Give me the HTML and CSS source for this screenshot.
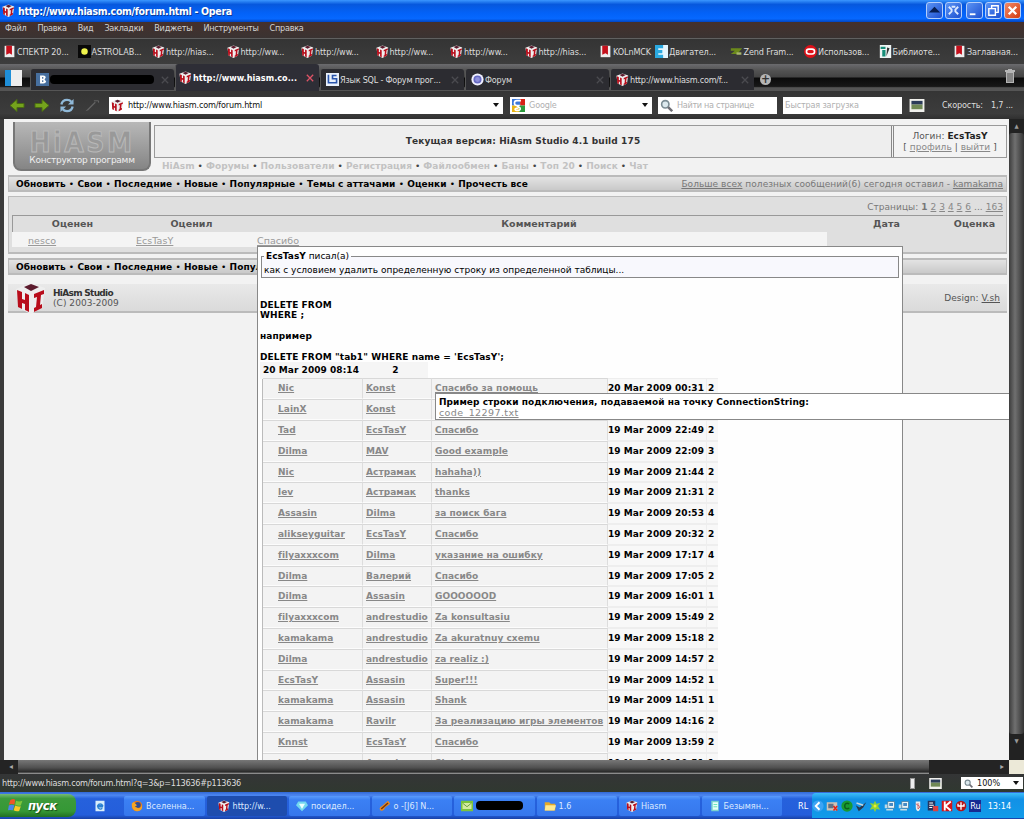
FILE: index.html
```html
<!DOCTYPE html>
<html lang="ru">
<head>
  <meta charset="UTF-8">
  <title>http://www.hiasm.com/forum.html - Opera</title>
  <link rel="stylesheet" href="styles.css">
</head>
<body>

  <!-- Иконки -->
  <svg class="sprite" width="0" height="0">
    <symbol id="hi" viewBox="0 0 32 32">
      <path d="M16 1l14 5-3 20-11 6L4 26 1 7z" fill="#eee"/>
      <path d="M9 5l7-3 8 3-8 4z" fill="#5c1b2d"/>
      <path d="M2 8l5 2v7l3 1v-7l4 2v17l-4-2v-6l-3-1v6l-4-2zM19 12l10-4v4l-3 1-1 10 2-1v4l-8 4v-4l2-1 1-10-3 1z" fill="#b80d1b"/>
    </symbol>
    <symbol id="book" viewBox="0 0 16 16">
      <path d="M2 1h12v14H2z" fill="#eee"/><path d="M4 1h7v11l-3-2-4 2z" fill="#c4101c"/>
    </symbol>
    <symbol id="sun" viewBox="0 0 16 16">
      <path d="M0 0h16v16H0z" fill="#090909"/><circle cx="8" cy="8" r="4" fill="#f0f44c"/>
    </symbol>
    <symbol id="eng" viewBox="0 0 16 16">
      <path d="M0 0h16v16H0z" fill="#e5f6ff"/><path d="M0 0h10v4H4v2h5v4H4v2h6v4H0z" fill="#2ba9e0"/>
    </symbol>
    <symbol id="zend" viewBox="0 0 16 16">
      <path d="M1 4h14l-6 7H1l5-4H1z" fill="#6c8a1b"/><path d="M8 9h6v3H8z" fill="#a7b56c"/>
    </symbol>
    <symbol id="oracle" viewBox="0 0 16 16">
      <circle cx="8" cy="8" r="8" fill="#dd1018"/><rect x="3" y="5" width="10" height="6" rx="3" fill="#dd1018" stroke="#fff" stroke-width="2"/>
    </symbol>
    <symbol id="lib" viewBox="0 0 16 16">
      <path d="M1 0h14v16H1z" fill="#eef5f4"/><path d="M2 2h6v3H2zM4 6h4v8H4z" fill="#168d78"/><path d="M10 3l3 1-4 10z" fill="#333"/>
    </symbol>
    <symbol id="vk" viewBox="0 0 16 16">
      <path d="M0 0h16v16H0z" fill="#476f9f"/><path d="M5 3h4q3 0 3 2.500L10.500 8l2 2.500Q12 13 9 13H5zm2.500 2v2H9V5zm0 4v2H9V9z" fill="#fff"/>
    </symbol>
    <symbol id="sql" viewBox="0 0 16 16">
      <path d="M0 0h16v16H0z" fill="#e9f0fb"/><path d="M3 2v10h5M13 3H8v4h5v5H8" fill="none" stroke="#2a55ac" stroke-width="2"/>
    </symbol>
    <symbol id="forum" viewBox="0 0 16 16">
      <circle cx="8" cy="8" r="7.500" fill="#f0f0ff"/><circle cx="8" cy="8" r="4" fill="#8f90dc" stroke="#666ac2" stroke-width="2"/>
    </symbol>
    <symbol id="close" viewBox="0 0 10 10">
      <path d="M1 1l8 8M9 1L1 9" fill="none" stroke="currentColor" stroke-width="1.600"/>
    </symbol>
    <symbol id="arrow" viewBox="0 0 16 14">
      <path d="M1 7l7-6v4h7v4H8v4z" fill="#75a31d" stroke="#496b12"/>
    </symbol>
    <symbol id="reload" viewBox="0 0 16 16">
      <path d="M2 7q1-5 6-5 3 0 4.500 2M14 9q-1 5-6 5-3 0-4.500-2" fill="none" stroke="#8fb8d8" stroke-width="2.500"/>
      <path d="M15 1v6H9zM1 15V9h6z" fill="#8fb8d8"/>
    </symbol>
    <symbol id="pen" viewBox="0 0 16 16">
      <path d="M1 14l3-1 8-8-1-1-8 8z" fill="#636363"/><path d="M10 3h5v2" fill="none" stroke="#666"/>
    </symbol>
    <symbol id="google" viewBox="0 0 16 16">
      <path d="M0 0h10v8H0z" fill="#3c78d8"/><path d="M10 0h6v8h-6z" fill="#d82216"/><path d="M0 8h9v8H0z" fill="#e9b414"/><path d="M9 8h7v8H9z" fill="#2c9b3c"/>
      <path d="M11 2H6a3 3 0 0 0 0 6h2l-1 1 3 2q1 3-3 3-4 0-3-2 1-1 4-1" fill="none" stroke="#fff" stroke-width="2"/>
    </symbol>
    <symbol id="lens" viewBox="0 0 16 16">
      <circle cx="6.500" cy="6.500" r="4.500" fill="#dce9ee" stroke="#7b8c94" stroke-width="2"/><path d="M10 10l5 5" stroke="#6f6f76" stroke-width="3"/>
    </symbol>
    <symbol id="pic" viewBox="0 0 16 14">
      <path d="M0 0h16v14H0z" fill="#f0f0ec"/><path d="M2 2h12v4H2z" fill="#2b3b59"/><path d="M2 6h12v5H2z" fill="#708955"/>
    </symbol>
    <symbol id="trash" viewBox="0 0 12 14">
      <path d="M2 3h8v11H2zM1 1h10v2H1zM4 0h4v1H4z" fill="#b5b5b5"/><path d="M4 4v9M6 4v9M8 4v9" stroke="#555"/>
    </symbol>
    <symbol id="ie" viewBox="0 0 16 16">
      <path d="M2 1h12v14H2z" fill="#d9eefb"/><path d="M12 9H5a3.500 3.500 0 0 0 6 2M5 7.500a3.500 3.500 0 0 1 6.500 0z" fill="none" stroke="#2b81d2" stroke-width="1.800"/>
    </symbol>
    <symbol id="fox" viewBox="0 0 16 16">
      <circle cx="8" cy="8" r="7" fill="#eb7b13"/><circle cx="9" cy="6.500" r="4" fill="#2d4b94"/><path d="M1 5q3-4 4-1l3 3-3 2 5 2q4 0 4-5 3 8-6 9Q1 14 1 5z" fill="#f4a524"/>
    </symbol>
    <symbol id="diamond" viewBox="0 0 16 16">
      <path d="M3 2h10l3 5-8 8-8-8z" fill="#73d8ef"/><path d="M4 5h8l-4 7z" fill="#eaffff"/>
    </symbol>
    <symbol id="guitar" viewBox="0 0 16 16">
      <path d="M2 14q-3-4 2-6l8-7 3 4-7 5q-1 5-6 4z" fill="#ec8b1f"/><path d="M3 12l9-8" stroke="#75350c" stroke-width="2"/>
    </symbol>
    <symbol id="mail" viewBox="0 0 16 14">
      <path d="M0 0h16v14H0z" fill="#7cc43b"/><path d="M2 3h12v8H2z" fill="#d3ea9f"/><path d="M2 3l6 5 6-5" fill="none" stroke="#528c29"/>
    </symbol>
    <symbol id="folder" viewBox="0 0 16 14">
      <path d="M1 2h6l2 2h6v9H1z" fill="#e4a928"/><path d="M2 6h14l-2 7H1z" fill="#ffe990"/>
    </symbol>
    <symbol id="note" viewBox="0 0 16 16">
      <path d="M3 1h10v14H3z" fill="#7bd3cd"/><path d="M5 3h7v10H5z" fill="#e6fff7"/><path d="M6 6h5M6 9h5" stroke="#4da"/>
    </symbol>
    <symbol id="flag" viewBox="0 0 20 18">
      <path d="M3 2q4-2 6 0L8 8Q5 6 1 8z" fill="#ee5528"/><path d="M10 3q4 2 8 0l-2 6q-4 1-7-1z" fill="#80c63c"/>
      <path d="M1 9q4-2 7 0l-2 6q-3-1-6 0z" fill="#4b85e8"/><path d="M9 9q4 2 7 1l-2 6q-4 1-7-1z" fill="#fbc929"/>
    </symbol>
    <symbol id="plug" viewBox="0 0 16 16">
      <path d="M1 6h5v5H1z" fill="#bcd8e8"/><path d="M5 2h9v9H5z" fill="#e9f4f8" stroke="#457a9c"/><path d="M7 4h5v4H7z" fill="#478bc4"/><path d="M3 12h9v2H3z" fill="#c3dbe5"/>
    </symbol>
  </svg>

  <div class="window">
    <div class="titlebar">
      <svg class="icon14"><use href="#hi"/></svg>
      <span class="title">http://www.hiasm.com/forum.html - Opera</span>
      <div class="win-buttons">
        <span class="win-btn"><svg viewBox="0 0 16 16"><path d="M2 10l6-6 6 6z" fill="#071e53"/></svg></span>
        <span class="win-btn"><svg viewBox="0 0 16 16"><path d="M3 4l3 3v2l-3 3M13 4l-3 3v2l3 3M6 4h4" fill="none" stroke="#dce9ff" stroke-width="2"/></svg></span>
        <span class="win-btn min"><svg viewBox="0 0 16 16"><path d="M3 11h6v2H3z" fill="#fff"/></svg></span>
        <span class="win-btn"><svg viewBox="0 0 16 16"><path d="M6 6V3h7v7h-3M3 6h7v7H3z" fill="none" stroke="#fff" stroke-width="1.500"/></svg></span>
        <span class="win-btn red"><svg viewBox="0 0 16 16"><path d="M4 4l8 8M12 4l-8 8" stroke="#fff" stroke-width="2.500"/></svg></span>
      </div>
    </div>

    <div class="menubar">
      <span>Файл</span><span>Правка</span><span>Вид</span><span>Закладки</span><span>Виджеты</span><span>Инструменты</span><span>Справка</span>
    </div>

    <div class="bookmarks">
      <a><svg><use href="#book"/></svg>СПЕКТР 20...</a>
      <a><svg><use href="#sun"/></svg>ASTROLAB...</a>
      <a><svg><use href="#hi"/></svg>http://hias...</a>
      <a><svg><use href="#hi"/></svg>http://ww...</a>
      <a><svg><use href="#hi"/></svg>http://ww...</a>
      <a><svg><use href="#hi"/></svg>http://ww...</a>
      <a><svg><use href="#hi"/></svg>http://ww...</a>
      <a><svg><use href="#hi"/></svg>http://hias...</a>
      <a class="narrow"><svg><use href="#book"/></svg>KOLnMCK</a>
      <a><svg><use href="#eng"/></svg>Двигател...</a>
      <a><svg><use href="#zend"/></svg>Zend Fram...</a>
      <a><svg><use href="#oracle"/></svg>Использов...</a>
      <a><svg><use href="#lib"/></svg>Библиоте...</a>
      <a><svg><use href="#book"/></svg>Заглавная...</a>
    </div>

    <div class="tabs">
      <span class="panel-btn"></span>
      <div class="tab"><svg><use href="#vk"/></svg><span class="blot"></span><svg class="x"><use href="#close"/></svg></div>
      <div class="tab active"><svg><use href="#hi"/></svg><span>http://www.hiasm.co...</span><svg class="x"><use href="#close"/></svg></div>
      <div class="tab"><svg><use href="#sql"/></svg><span>Язык SQL - Форум прог...</span><svg class="x"><use href="#close"/></svg></div>
      <div class="tab"><svg><use href="#forum"/></svg><span>Форум</span><svg class="x"><use href="#close"/></svg></div>
      <div class="tab"><svg><use href="#hi"/></svg><span>http://www.hiasm.com/f...</span><svg class="x"><use href="#close"/></svg></div>
      <span class="new-tab">+</span>
      <svg class="trash"><use href="#trash"/></svg>
    </div>

    <div class="address">
      <svg class="nav-icon"><use href="#arrow"/></svg>
      <svg class="nav-icon forward"><use href="#arrow"/></svg>
      <svg class="nav-icon"><use href="#reload"/></svg>
      <svg class="nav-icon"><use href="#pen"/></svg>
      <div class="field url"><svg><use href="#hi"/></svg><span>http://www.hiasm.com/forum.html</span><i class="caret"></i></div>
      <div class="field google"><svg><use href="#google"/></svg><span>Google</span><i class="caret"></i></div>
      <div class="field find"><svg><use href="#lens"/></svg><span>Найти на странице</span></div>
      <div class="field fast"><span>Быстрая загрузка</span></div>
      <svg class="pic"><use href="#pic"/></svg>
      <span class="speed">Скорость:</span><span class="speed">1,7 ...</span>
    </div>

    <div class="view">
      <div class="page">
        <header class="head">
          <div class="logo"><b>HiASM</b><span>Конструктор программ</span></div>
          <div class="head-main">
            <div class="boxes">
              <div class="version">Текущая версия: HiAsm Studio 4.1 build 175</div>
              <div class="login"><div>Логин: <b>EcsTasY</b></div><div>[ <a>профиль</a> | <a>выйти</a> ]</div></div>
            </div>
            <nav class="site-nav">
              <a>HiAsm</a>•<a>Форумы</a>•<a>Пользователи</a>•<a>Регистрация</a>•<a>Файлообмен</a>•<a>Баны</a>•<a>Топ 20</a>•<a>Поиск</a>•<a>Чат</a>
            </nav>
          </div>
        </header>

        <div class="bar">
          <div class="bar-links">Обновить <i>•</i> Свои <i>•</i> Последние <i>•</i> Новые <i>•</i> Популярные <i>•</i> Темы с аттачами <i>•</i> Оценки <i>•</i> Прочесть все</div>
          <div class="bar-note"><a>Больше всех</a> полезных сообщений(6) сегодня оставил - <a>kamakama</a></div>
        </div>

        <div class="rates">
          <div class="pages">Страницы: <b>1</b> <a>2</a> <a>3</a> <a>4</a> <a>5</a> <a>6</a> ... <a>163</a></div>
          <div class="rates-head"><span>Оценен</span><span>Оценил</span><span>Комментарий</span><span>Дата</span><span>Оценка</span></div>
          <div class="rates-row"><a>nesco</a><a>EcsTasY</a><a>Спасибо</a></div>
        </div>

        <div class="bar second">
          <div class="bar-links">Обновить <i>•</i> Свои <i>•</i> Последние <i>•</i> Новые <i>•</i> Популярные</div>
        </div>

        <footer class="foot">
          <svg><use href="#hi"/></svg>
          <div class="copy"><b>HiAsm Studio</b><br>(C) 2003-2009</div>
          <div class="design">Design: <a>V.sh</a></div>
        </footer>

        <!-- Всплывающее сообщение -->
        <div class="popup">
          <fieldset>
            <legend><b>EcsTasY</b> писал(а)</legend>
            как с условием удалить определенную строку из определенной таблицы...
          </fieldset>
          <div class="message">DELETE FROM<br>WHERE ;<br><br>например<br><br>DELETE FROM "tab1" WHERE name = 'EcsTasY';</div>
          <div class="first"><span>20 Mar 2009 08:14</span><span>2</span></div>
          <div class="list">
            <div class="row"><a>Nic</a><a>Konst</a><a>Спасибо за помощь</a><span>20 Mar 2009 00:31</span><span>2</span></div>
            <div class="row"><a>LainX</a><a>Konst</a><a></a><span></span><span></span></div>
            <div class="row"><a>Tad</a><a>EcsTasY</a><a>Спасибо</a><span>19 Mar 2009 22:49</span><span>2</span></div>
            <div class="row"><a>Dilma</a><a>MAV</a><a>Good example</a><span>19 Mar 2009 22:09</span><span>3</span></div>
            <div class="row"><a>Nic</a><a>Астрамак</a><a>hahaha))</a><span>19 Mar 2009 21:44</span><span>2</span></div>
            <div class="row"><a>lev</a><a>Астрамак</a><a>thanks</a><span>19 Mar 2009 21:31</span><span>2</span></div>
            <div class="row"><a>Assasin</a><a>Dilma</a><a>за поиск бага</a><span>19 Mar 2009 20:53</span><span>4</span></div>
            <div class="row"><a>alikseyguitar</a><a>EcsTasY</a><a>Спасибо</a><span>19 Mar 2009 20:32</span><span>2</span></div>
            <div class="row"><a>filyaxxxcom</a><a>Dilma</a><a>указание на ошибку</a><span>19 Mar 2009 17:17</span><span>4</span></div>
            <div class="row"><a>Dilma</a><a>Валерий</a><a>Спасибо</a><span>19 Mar 2009 17:05</span><span>2</span></div>
            <div class="row"><a>Dilma</a><a>Assasin</a><a>GOOOOOOD</a><span>19 Mar 2009 16:01</span><span>1</span></div>
            <div class="row"><a>filyaxxxcom</a><a>andrestudio</a><a>Za konsultasiu</a><span>19 Mar 2009 15:49</span><span>2</span></div>
            <div class="row"><a>kamakama</a><a>andrestudio</a><a>Za akuratnuy cxemu</a><span>19 Mar 2009 15:18</span><span>2</span></div>
            <div class="row"><a>Dilma</a><a>andrestudio</a><a>za realiz :)</a><span>19 Mar 2009 14:57</span><span>2</span></div>
            <div class="row"><a>EcsTasY</a><a>Assasin</a><a>Super!!!</a><span>19 Mar 2009 14:52</span><span>1</span></div>
            <div class="row"><a>kamakama</a><a>Assasin</a><a>Shank</a><span>19 Mar 2009 14:51</span><span>1</span></div>
            <div class="row"><a>kamakama</a><a>Ravilr</a><a>За реализацию игры элементов</a><span>19 Mar 2009 14:16</span><span>2</span></div>
            <div class="row"><a>Knnst</a><a>EcsTasY</a><a>Спасибо</a><span>19 Mar 2009 13:59</span><span>2</span></div>
            <div class="row"><a>kamakama</a><a>Assasin</a><a>Shank</a><span>19 Mar 2009 10:51</span><span>1</span></div>
          </div>
        </div>
        <div class="hint"><b>Пример строки подключения, подаваемой на точку ConnectionString:</b><a>code_12297.txt</a></div>
      </div>
      <div class="vscroll"><span>▲</span><span class="thumb"></span><span>▼</span></div>
    </div>

    <div class="hscroll"><span>◂</span><span class="thumb"></span><span>▸</span><i class="corner"></i></div>

    <div class="status">
      <span class="link">http://www.hiasm.com/forum.html?q=3&amp;p=113636#p113636</span>
      <i class="width-btn"></i>
      <svg class="pic small"><use href="#pic"/></svg>
      <div class="zoom"><svg><use href="#lens"/></svg>100%<i class="caret"></i></div>
    </div>

    <div class="taskbar">
      <div class="start"><svg><use href="#flag"/></svg>пуск</div>
      <svg class="quick"><use href="#ie"/></svg>
      <div class="task"><svg><use href="#fox"/></svg>Вселенна...</div>
      <div class="task pressed"><svg><use href="#hi"/></svg>http://w...</div>
      <div class="task"><svg><use href="#diamond"/></svg>посидел...</div>
      <div class="task"><svg><use href="#guitar"/></svg>o -[J6] N...</div>
      <div class="task"><svg><use href="#mail"/></svg><span class="blot"></span></div>
      <div class="task"><svg><use href="#folder"/></svg>1.6</div>
      <div class="task"><svg><use href="#hi"/></svg>Hiasm</div>
      <div class="task"><svg><use href="#note"/></svg>Безымян...</div>
      <span class="lang">RL</span>
      <div class="tray">
        <svg viewBox="0 0 16 16"><circle cx="8" cy="8" r="7.500" fill="#3ca4f4"/><path d="M10 3L5 8l5 5" fill="none" stroke="#fff" stroke-width="2.500"/></svg>
        <svg viewBox="0 0 16 16"><path d="M1 3h14v11H1z" fill="#cfc2b5"/><path d="M3 5h7v6H3z" fill="#5f7287"/><path d="M10 8l5 6M15 8l-5 6" stroke="#e32114" stroke-width="2"/></svg>
        <svg viewBox="0 0 16 16"><circle cx="8" cy="8" r="7.500" fill="#189a34"/><path d="M11 5q-6-2-6 3t6 3" fill="none" stroke="#0b5f1a" stroke-width="2"/></svg>
        <svg viewBox="0 0 16 16"><path d="M1 7l5 3 9-7-4 7-6 5z" fill="#28384e"/><path d="M2 4l9 3" stroke="#c5d7df" stroke-width="2"/></svg>
        <svg viewBox="0 0 16 16"><path d="M8 1l2 4 5-1-3 4 3 5-5-1-2 4-2-4-5 1 3-5-3-4 5 1z" fill="#8ed336"/><circle cx="8" cy="8" r="2" fill="#edeb35"/></svg>
        <svg><use href="#plug"/></svg>
        <svg><use href="#plug"/></svg>
        <svg viewBox="0 0 16 16"><path d="M5 2h6v7q0 5-3 6-3-1-3-6z" fill="#e9edf0"/><path d="M8 4v8l3-3-6-4" fill="none" stroke="#c6484d"/></svg>
        <svg viewBox="0 0 16 16"><path d="M1 1h10v13H1z" fill="#25345f"/><path d="M3 4h5M3 7h6M3 10h4" stroke="#fff" stroke-width="1.500"/><path d="M8 8h7v7H8z" fill="#db4040"/></svg>
        <svg viewBox="0 0 16 16"><path d="M1 1h14v14H1z" fill="#d4141b"/><path d="M5 2v12M13 2L6 8l7 6" fill="none" stroke="#fff" stroke-width="2.500"/></svg>
        <svg viewBox="0 0 16 16"><circle cx="8" cy="8" r="7" fill="#b51317"/><path d="M4 5v3h8V5M8 3v10" fill="none" stroke="#fff" stroke-width="1.800"/></svg>
        <span class="ru">Ru</span>
        <span class="clock">13:14</span>
      </div>
    </div>
  </div>

</body>
</html>
```

FILE: styles.css
```css
body {
  margin: 0;
  background-color: #333;
  font-family: "DejaVu Sans Condensed", "DejaVu Sans", sans-serif;
  font-size: 9px;
}

.sprite {
  display: block;
}

.window {
  display: flex;
  flex-direction: column;
  width: 1024px;
  height: 819px;
  overflow: hidden;
  white-space: nowrap;
}

.window svg {
  flex: none;
}

/* Title */
.titlebar {
  display: flex;
  align-items: center;
  box-sizing: border-box;
  height: 22px;
  padding: 0 3px 1px 2px;
  background: linear-gradient(#3b97ff, #0758dd 20%, #0362f8 60%, #0668ff 85%, #0144c0);
  color: #fff;
}

.icon14 {
  width: 13px;
  height: 13px;
}

.title {
  margin-left: 3px;
  font-size: 10.500px;
  font-weight: bold;
  letter-spacing: -0.3px;
  text-shadow: 1px 1px #0a3b9b;
}

.win-buttons {
  display: flex;
  gap: 2px;
  margin-left: auto;
}

.win-btn {
  box-sizing: border-box;
  width: 17px;
  height: 17px;
  border: 1px solid #b4cefa;
  border-radius: 3px;
  background: linear-gradient(135deg, #5b93f4, #1d50d0);
}

.win-btn svg {
  display: block;
  width: 15px;
  height: 15px;
}

.min {
  margin-left: 2px;
}

.red {
  background: linear-gradient(135deg, #f38a68, #d23c10);
}

/* Menu */
.menubar {
  display: flex;
  gap: 11px;
  box-sizing: border-box;
  height: 16px;
  padding: 0 5px;
  line-height: 12px;
  letter-spacing: -0.25px;
  background: linear-gradient(#45302c, #3a3332);
  color: #d2d2d2;
}

.bookmarks {
  display: flex;
  align-items: center;
  box-sizing: border-box;
  height: 26px;
  padding-left: 3px;
  border-top: 1px solid #606060;
  background: linear-gradient(#343434, #3d3d3d);
  color: #ddd;
  letter-spacing: -0.1px;
}

.bookmarks a {
  display: flex;
  flex: none;
  align-items: center;
  gap: 1px;
  width: 74.500px;
  overflow: hidden;
}

.bookmarks .narrow {
  width: 56px;
}

.bookmarks svg {
  width: 13px;
  height: 13px;
}

/* Tabs */
.tabs {
  display: flex;
  align-items: center;
  height: 27px;
  gap: 1px;
  padding: 0 8px 0 5px;
  background: linear-gradient(#6b6b6e, #525252 25%, #444 48%, #0b0b0b 52%, #171717 83%, #555 88%, #555);
  color: #ddd;
}

.panel-btn {
  width: 17px;
  height: 16px;
  margin-right: 7px;
  background: linear-gradient(90deg, #1f8fd8 6px, #eee 6px);
}

.tab {
  display: flex;
  align-items: center;
  box-sizing: border-box;
  width: 144px;
  height: 21px;
  margin-top: 4px;
  padding: 0 5px;
  gap: 1px;
  border-left: 1px solid #555;
  border-radius: 3px 3px 0 0;
  background: #2c2c31;
  letter-spacing: -0.22px;
}

.tab svg {
  width: 13px;
  height: 13px;
}

.tab .x {
  width: 8px;
  height: 8px;
  margin-left: auto;
  color: #4b4b50;
}

.tab.active {
  height: 27px;
  margin-top: 0;
  padding-left: 3px;
  background: #2e2e36;
  color: #fff;
  font-weight: bold;
}

.tab.active span {
  letter-spacing: 0.03px;
}

.tab.active .x {
  color: #de5366;
}

.blot {
  width: 104px;
  height: 9px;
  border-radius: 4px;
  background: #000;
}

.new-tab {
  width: 11px;
  height: 11px;
  margin: 4px 0 0 5px;
  border-radius: 50%;
  background: #b5b5b5;
  color: #333;
  font-size: 12px;
  font-weight: bold;
  line-height: 11px;
  text-align: center;
}

.trash {
  width: 12px;
  height: 14px;
  margin: 0 0 4px auto;
}

/* Address bar */
.address {
  display: flex;
  align-items: center;
  box-sizing: border-box;
  height: 28px;
  padding-left: 9px;
  background: linear-gradient(#353535, #3c3c3c 80%, #303030);
  color: #ddd;
  letter-spacing: -0.15px;
}

.nav-icon {
  width: 16px;
  height: 15px;
  margin-right: 9px;
}

.forward {
  transform: scaleX(-1);
}

.field {
  display: flex;
  align-items: center;
  box-sizing: border-box;
  height: 17px;
  padding: 0 4px 0 2px;
  background: #fff;
  color: #b0b0b0;
}

.field svg {
  width: 13px;
  height: 13px;
  margin-right: 4px;
}

.url {
  width: 394px;
  margin-right: 7px;
  color: #111;
}

.google {
  width: 142px;
  margin-right: 6px;
}

.find {
  width: 119px;
  margin-right: 6px;
  letter-spacing: -0.3px;
}

.fast {
  width: 119px;
  margin-right: 7px;
}

.caret {
  margin-left: auto;
  border: 3px solid transparent;
  border-top: 4px solid #111;
  border-bottom: 0;
}

.pic {
  width: 16px;
  height: 13px;
}

.pic.small {
  width: 13px;
  height: 11px;
}

.speed {
  margin-left: 17px;
}

.speed + .speed {
  margin-left: 8px;
}

/* Page */
.view {
  display: flex;
  height: 641px;
  border-left: 4px solid #3b3b3b;
}

.page {
  position: relative;
  box-sizing: border-box;
  width: 1005px;
  padding: 3px 2px 0 4px;
  overflow: hidden;
  background: #f2f2f2;
  color: #555;
  font-family: "DejaVu Sans", sans-serif;
  font-size: 9px;
  letter-spacing: 0.05px;
}

.page a {
  text-decoration: underline;
}

.head {
  display: flex;
  height: 53px;
}

.logo {
  display: flex;
  flex-direction: column;
  align-items: center;
  box-sizing: border-box;
  width: 138px;
  height: 49px;
  margin: 0 3px 0 5px;
  padding-top: 9px;
  border: 2px solid #777;
  border-top: 0;
  border-radius: 0 0 8px 8px;
  background: linear-gradient(#b8b8b8, #858585);
  color: #eee;
  line-height: 11px;
}

.logo b {
  color: #999;
  font-family: "DejaVu Sans Condensed";
  font-size: 28px;
  line-height: 23px;
  letter-spacing: 2.500px;
  -webkit-text-stroke: 1px #b8b8b8;
}

.logo span {
  margin-top: 1px;
  letter-spacing: -0.25px;
}

.head-main {
  flex: 1;
  padding-top: 3px;
}

.boxes {
  display: flex;
  box-sizing: border-box;
  height: 33px;
  border: 1px solid #999;
}

.version {
  flex: 1;
  line-height: 31px;
  text-align: center;
  background: #eee;
  color: #333;
  font-weight: bold;
  letter-spacing: 0.12px;
}

.login {
  width: 112px;
  padding-top: 5px;
  border-left: 3px double #888;
  line-height: 11px;
  text-align: center;
  background: #f3f3f3;
}

.login b {
  color: #222;
}

.login a {
  color: #888;
}

.site-nav {
  display: flex;
  gap: 3px;
  padding-left: 8px;
  line-height: 16px;
  color: #444;
}

.site-nav a {
  color: #c2c2c2;
  font-weight: bold;
  text-decoration: none;
}

.bar {
  display: flex;
  align-items: center;
  justify-content: space-between;
  box-sizing: border-box;
  height: 17px;
  padding: 0 3px 0 7px;
  border: 1px solid #bbb;
  border-width: 2px 1px;
  background: linear-gradient(#e3e3e3, #c9c9c9);
}

.bar-links {
  color: #000;
  font-weight: bold;
}

.bar-note {
  color: #777;
}

.bar-links i {
  font-style: normal;
  font-weight: normal;
}

.rates {
  box-sizing: border-box;
  height: 58px;
  margin: 4px 0;
  padding: 3px;
  border: 1px solid #bbb;
  border-bottom-width: 2px;
  background: #dfdfdf;
}

.pages {
  height: 15px;
  line-height: 15px;
  text-align: right;
  color: #777;
}

.pages a {
  color: #888;
}

.rates-head {
  display: grid;
  grid-template-columns: 119px 119px 576px 119px 1fr;
  border-top: 1px solid #999;
  border-left: 1px solid #999;
  line-height: 16px;
  text-align: center;
  font-size: 9.500px;
  font-weight: bold;
}

.rates-row {
  display: grid;
  grid-template-columns: 108px 121px 1fr;
  width: 799px;
  height: 15px;
  padding-left: 16px;
  background: #f4f4f4;
  color: #999;
  font-size: 9.500px;
  line-height: 17px;
}

.second {
  margin-bottom: 9px;
}

.foot {
  display: flex;
  align-items: center;
  height: 27px;
  padding: 0 7px;
  border-bottom: 2px solid #bbb;
  background: linear-gradient(#e9e9e9, #dadada);
}

.foot svg {
  width: 32px;
  height: 32px;
}

.copy {
  margin-left: 6px;
  line-height: 10px;
}

.copy b {
  color: #333;
  letter-spacing: -0.7px;
}

.design {
  margin-left: auto;
}

/* Message popup, lies over the forum */
.popup {
  position: absolute;
  left: 253px;
  top: 127px;
  box-sizing: border-box;
  width: 646px;
  height: 540px;
  padding: 4px 2px;
  border: 1px solid #888;
  background: #fefefe;
  color: #000;
  font-weight: bold;
}

.popup fieldset {
  box-sizing: border-box;
  height: 27px;
  margin: 0 1px;
  padding: 1px 2px 0;
  border: 1px solid #888;
  background: #f8f8fd;
  font-weight: normal;
  letter-spacing: 0;
  line-height: 14px;
}

.popup legend {
  padding: 0 2px;
  line-height: 11px;
}

.message {
  margin-top: 22px;
  line-height: 10.400px;
  letter-spacing: 0.1px;
}

.first {
  display: grid;
  grid-template-columns: 103px 65px;
  height: 16px;
  line-height: 17px;
}

.first span {
  padding-left: 3px;
  background: #f5f5f5;
}

.first span + span {
  padding: 0;
  text-align: center;
}

.list {
  width: 455px;
  margin-left: 2px;
  border-left: 1px solid #bbb;
}

.row {
  display: grid;
  grid-template-columns: 100px 69px 176px 99px 11px;
  height: 20.800px;
  line-height: 18px;
}

.row a,
.row span {
  box-sizing: border-box;
  padding-left: 3px;
  border-top: 1px solid #d8d8d8;
  border-right: 1px solid #ddd;
  border-bottom: 1px solid #fcfcfc;
  background: #f3f3f3;
}

.row a {
  color: #888;
}

.row a:first-child {
  padding-left: 15px;
}

.row span {
  padding-left: 0;
  border-color: #eee;
  background: #f8f8f8;
}

.row span:last-child {
  padding-left: 1px;
  border-right: 0;
}

.hint {
  position: absolute;
  left: 431px;
  top: 274px;
  box-sizing: border-box;
  width: 590px;
  height: 27px;
  padding: 3px;
  border: 1px solid #888;
  background: #fff;
  color: #000;
  line-height: 10.500px;
}

.hint b,
.hint a {
  display: block;
}

.hint a {
  color: #888;
  font-size: 9.500px;
  letter-spacing: 0.4px;
}

/* Scrollbars */
.vscroll {
  display: flex;
  flex-direction: column;
  width: 15px;
  background: #222;
  color: #999;
  font-size: 6px;
  text-align: center;
}

.vscroll span {
  line-height: 14px;
}

.vscroll .thumb {
  height: 601px;
  border-radius: 3px;
  background: linear-gradient(90deg, #3c3c3c, #707070 40%, #333);
}

.hscroll {
  display: flex;
  height: 14px;
  padding-left: 4px;
  background: #242424;
  color: #aaa;
  font-size: 8px;
  line-height: 14px;
}

.hscroll span {
  width: 14px;
  text-align: center;
}

.hscroll .thumb {
  width: 911px;
  background: linear-gradient(#777, #505050 55%, #292929 85%, #aaa);
}

.hscroll .thumb + span {
  margin-left: auto;
}

.corner {
  width: 15px;
  background: #ece9d8;
}

/* Status */
.status {
  display: flex;
  align-items: center;
  height: 18px;
  padding: 0 1px 0 2px;
  background: linear-gradient(#343536, #303830);
  color: #ddd;
}

.link {
  letter-spacing: -0.25px;
}

.width-btn {
  width: 3px;
  height: 9px;
  margin: 0 14px 0 auto;
  border: 1px solid #999;
  background: #eee;
}

.zoom {
  display: flex;
  align-items: center;
  box-sizing: border-box;
  width: 62px;
  height: 12px;
  margin-left: 19px;
  padding: 0 4px 0 3px;
  background: #fff;
  color: #111;
}

.zoom svg {
  width: 9px;
  height: 9px;
  margin-right: 4px;
}

/* Taskbar */
.taskbar {
  display: flex;
  align-items: center;
  height: 27px;
  background: linear-gradient(#3168d5, #4d87f0 12%, #2661dc 25%, #245edb 85%, #1941a5);
  color: #fff;
}

.start {
  display: flex;
  align-items: center;
  box-sizing: border-box;
  width: 76px;
  height: 23px;
  margin-right: 18px;
  padding-left: 8px;
  gap: 4px;
  border-radius: 0 8px 8px 0;
  background: linear-gradient(#77b974, #3c9a3b 20%, #359835 75%, #226f22);
  font-size: 13px;
  font-style: italic;
  font-weight: bold;
  letter-spacing: -0.5px;
  text-shadow: 1px 1px 1px #174c17;
}

.start svg {
  width: 16px;
  height: 15px;
}

.quick {
  width: 12px;
  height: 12px;
  margin-right: 18px;
}

.task {
  display: flex;
  align-items: center;
  box-sizing: border-box;
  width: 80.500px;
  height: 20px;
  margin-right: 2px;
  padding-left: 7px;
  gap: 3px;
  border-radius: 2px;
  background: linear-gradient(#5a9bfc, #3b80f4 20%, #3677ec);
  color: #dce9ff;
}

.task.pressed {
  padding-left: 11px;
  background: #1e4dae;
}

.task svg {
  width: 12px;
  height: 12px;
}

.task .blot {
  width: 47px;
}

.lang {
  margin-left: 14px;
}

.tray {
  display: flex;
  flex: 1;
  align-items: center;
  height: 25px;
  margin-left: 4px;
  gap: 2.300px;
  border-radius: 4px 0 0;
  background: linear-gradient(#3dbcf8, #1291e6 25%, #119be9);
}

.tray svg {
  width: 12px;
  height: 12px;
}

.ru {
  width: 12px;
  background: #162b93;
  line-height: 12px;
  text-align: center;
}

.clock {
  margin-left: 4px;
}
```
